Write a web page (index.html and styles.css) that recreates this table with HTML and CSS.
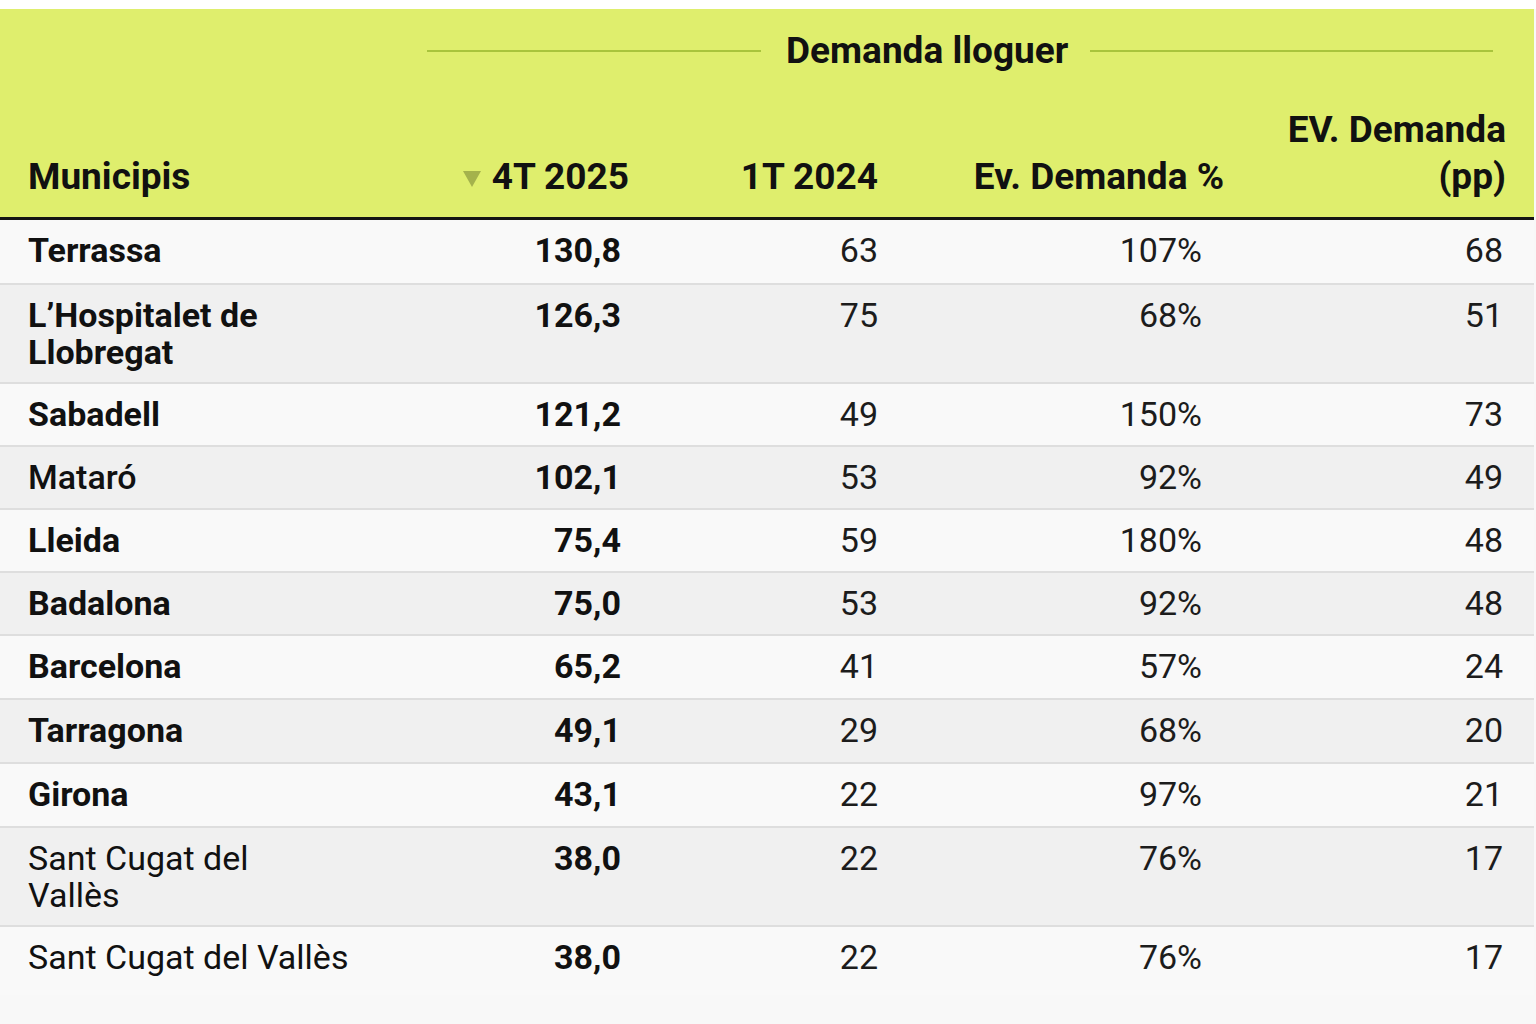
FILE: index.html
```html
<!DOCTYPE html>
<html lang="ca">
<head>
<meta charset="utf-8">
<title>Demanda lloguer</title>
<link rel="stylesheet" href="styles.css">
</head>
<body>
<div class="page">
  <table class="data">
    <colgroup>
      <col class="c-name">
      <col class="c-4t">
      <col class="c-1t">
      <col class="c-pct">
      <col class="c-pp">
    </colgroup>
    <thead>
      <tr class="group-row">
        <th></th>
        <th colspan="4" class="group">
          <div class="group-inner">
            <span class="rule rule-left"></span>
            <span class="group-title">Demanda lloguer</span>
            <span class="rule rule-right"></span>
          </div>
        </th>
      </tr>
      <tr class="head-row">
        <th class="h-name">Municipis</th>
        <th class="h-num h-4t"><svg class="sort" width="18" height="16" viewBox="0 0 18 16" aria-hidden="true"><path d="M0 0 H18 L9 16 Z"/></svg>4T 2025</th>
        <th class="h-num h-1t">1T 2024</th>
        <th class="h-num h-pct">Ev. Demanda %</th>
        <th class="h-num h-pp">EV. Demanda<br>(pp)</th>
      </tr>
    </thead>
    <tbody>
      <tr class="odd first"><td class="name b">Terrassa</td><td class="v4">130,8</td><td class="v1">63</td><td class="vp">107%</td><td class="vpp">68</td></tr>
      <tr class="even tall"><td class="name b">L’Hospitalet de<br>Llobregat</td><td class="v4">126,3</td><td class="v1">75</td><td class="vp">68%</td><td class="vpp">51</td></tr>
      <tr class="odd"><td class="name b">Sabadell</td><td class="v4">121,2</td><td class="v1">49</td><td class="vp">150%</td><td class="vpp">73</td></tr>
      <tr class="even"><td class="name m">Mataró</td><td class="v4">102,1</td><td class="v1">53</td><td class="vp">92%</td><td class="vpp">49</td></tr>
      <tr class="odd"><td class="name b">Lleida</td><td class="v4">75,4</td><td class="v1">59</td><td class="vp">180%</td><td class="vpp">48</td></tr>
      <tr class="even"><td class="name b">Badalona</td><td class="v4">75,0</td><td class="v1">53</td><td class="vp">92%</td><td class="vpp">48</td></tr>
      <tr class="odd plus"><td class="name b">Barcelona</td><td class="v4">65,2</td><td class="v1">41</td><td class="vp">57%</td><td class="vpp">24</td></tr>
      <tr class="even plus"><td class="name b">Tarragona</td><td class="v4">49,1</td><td class="v1">29</td><td class="vp">68%</td><td class="vpp">20</td></tr>
      <tr class="odd plus"><td class="name b">Girona</td><td class="v4">43,1</td><td class="v1">22</td><td class="vp">97%</td><td class="vpp">21</td></tr>
      <tr class="even tall"><td class="name">Sant Cugat del<br>Vallès</td><td class="v4">38,0</td><td class="v1">22</td><td class="vp">76%</td><td class="vpp">17</td></tr>
      <tr class="odd last"><td class="name">Sant Cugat del Vallès</td><td class="v4">38,0</td><td class="v1">22</td><td class="vp">76%</td><td class="vpp">17</td></tr>
    </tbody>
  </table>
</div>
</body>
</html>
```
FILE: styles.css
```css
html, body {
  margin: 0;
  padding: 0;
  background: #f8f8f8;
}
body {
  font-family: Roboto, "Liberation Sans", Arial, sans-serif;
  color: #151515;
}
.page {
  padding-top: 9px;
  width: 1536px;
  height: 1015px;
  background: linear-gradient(#ffffff 0 9px, #f8f8f8 9px);
}
.data {
  width: 1534px;
  border-collapse: collapse;
  table-layout: fixed;
}
.c-name { width: 400px; }
.c-4t { width: 250px; }
.c-1t { width: 250px; }
.c-pct { width: 340px; }
.c-pp { width: 294px; }

thead {
  background: #dfee6d;
}
thead th {
  font-weight: 700;
  font-size: 37px;
  color: #111;
  padding: 0;
}
.group-row th {
  height: 90px;
  vertical-align: top;
}
.group-inner {
  display: flex;
  align-items: center;
  padding: 21px 41px 0 27px;
}
.rule {
  height: 2px;
  background: #a9c43c;
}
.rule-left { width: 334px; margin-right: 25px; }
.rule-right { flex: 1; margin-left: 22px; }
.group-title {
  line-height: 42px;
  white-space: nowrap;
}
.head-row th {
  height: 101px;
  vertical-align: bottom;
  line-height: 47px;
  padding-bottom: 17px;
  border-bottom: 3px solid #141414;
}
.h-name {
  text-align: left;
  padding-left: 28px !important;
}
.h-num { text-align: right; }
.h-4t { padding-right: 21px !important; }
.h-1t { padding-right: 22px !important; }
.h-pct { padding-right: 16px !important; }
.h-pp { padding-right: 28px !important; }
.sort {
  fill: #a4b24c;
  margin-right: 11px;
  vertical-align: 2px;
}

tbody td {
  font-size: 34px;
  line-height: 37px;
  padding: 12px 0 12px;
  height: 37px;
  vertical-align: top;
  text-align: right;
  color: #1c1c1c;
  border-bottom: 2px solid #dedede;
}
tbody tr.odd { background: #f9f9f9; }
tbody tr.even { background: #f0f0f0; }
tbody tr.first td { padding-bottom: 14px; }
tbody tr.plus td { padding-bottom: 13px; }
tbody tr.tall td { padding-bottom: 11px; height: 74px; }
tbody tr.last td { border-bottom: none; padding-bottom: 19px; }
.name {
  text-align: left;
  padding-left: 28px !important;
  color: #111;
  font-weight: 400;
}
.name.b { font-weight: 700; }
.name.m { font-weight: 500; }
.v4 { font-weight: 700; padding-right: 29px !important; color: #111; }
.v1 { padding-right: 22px !important; }
.vp { padding-right: 38px !important; }
.vpp { padding-right: 31px !important; }
```
